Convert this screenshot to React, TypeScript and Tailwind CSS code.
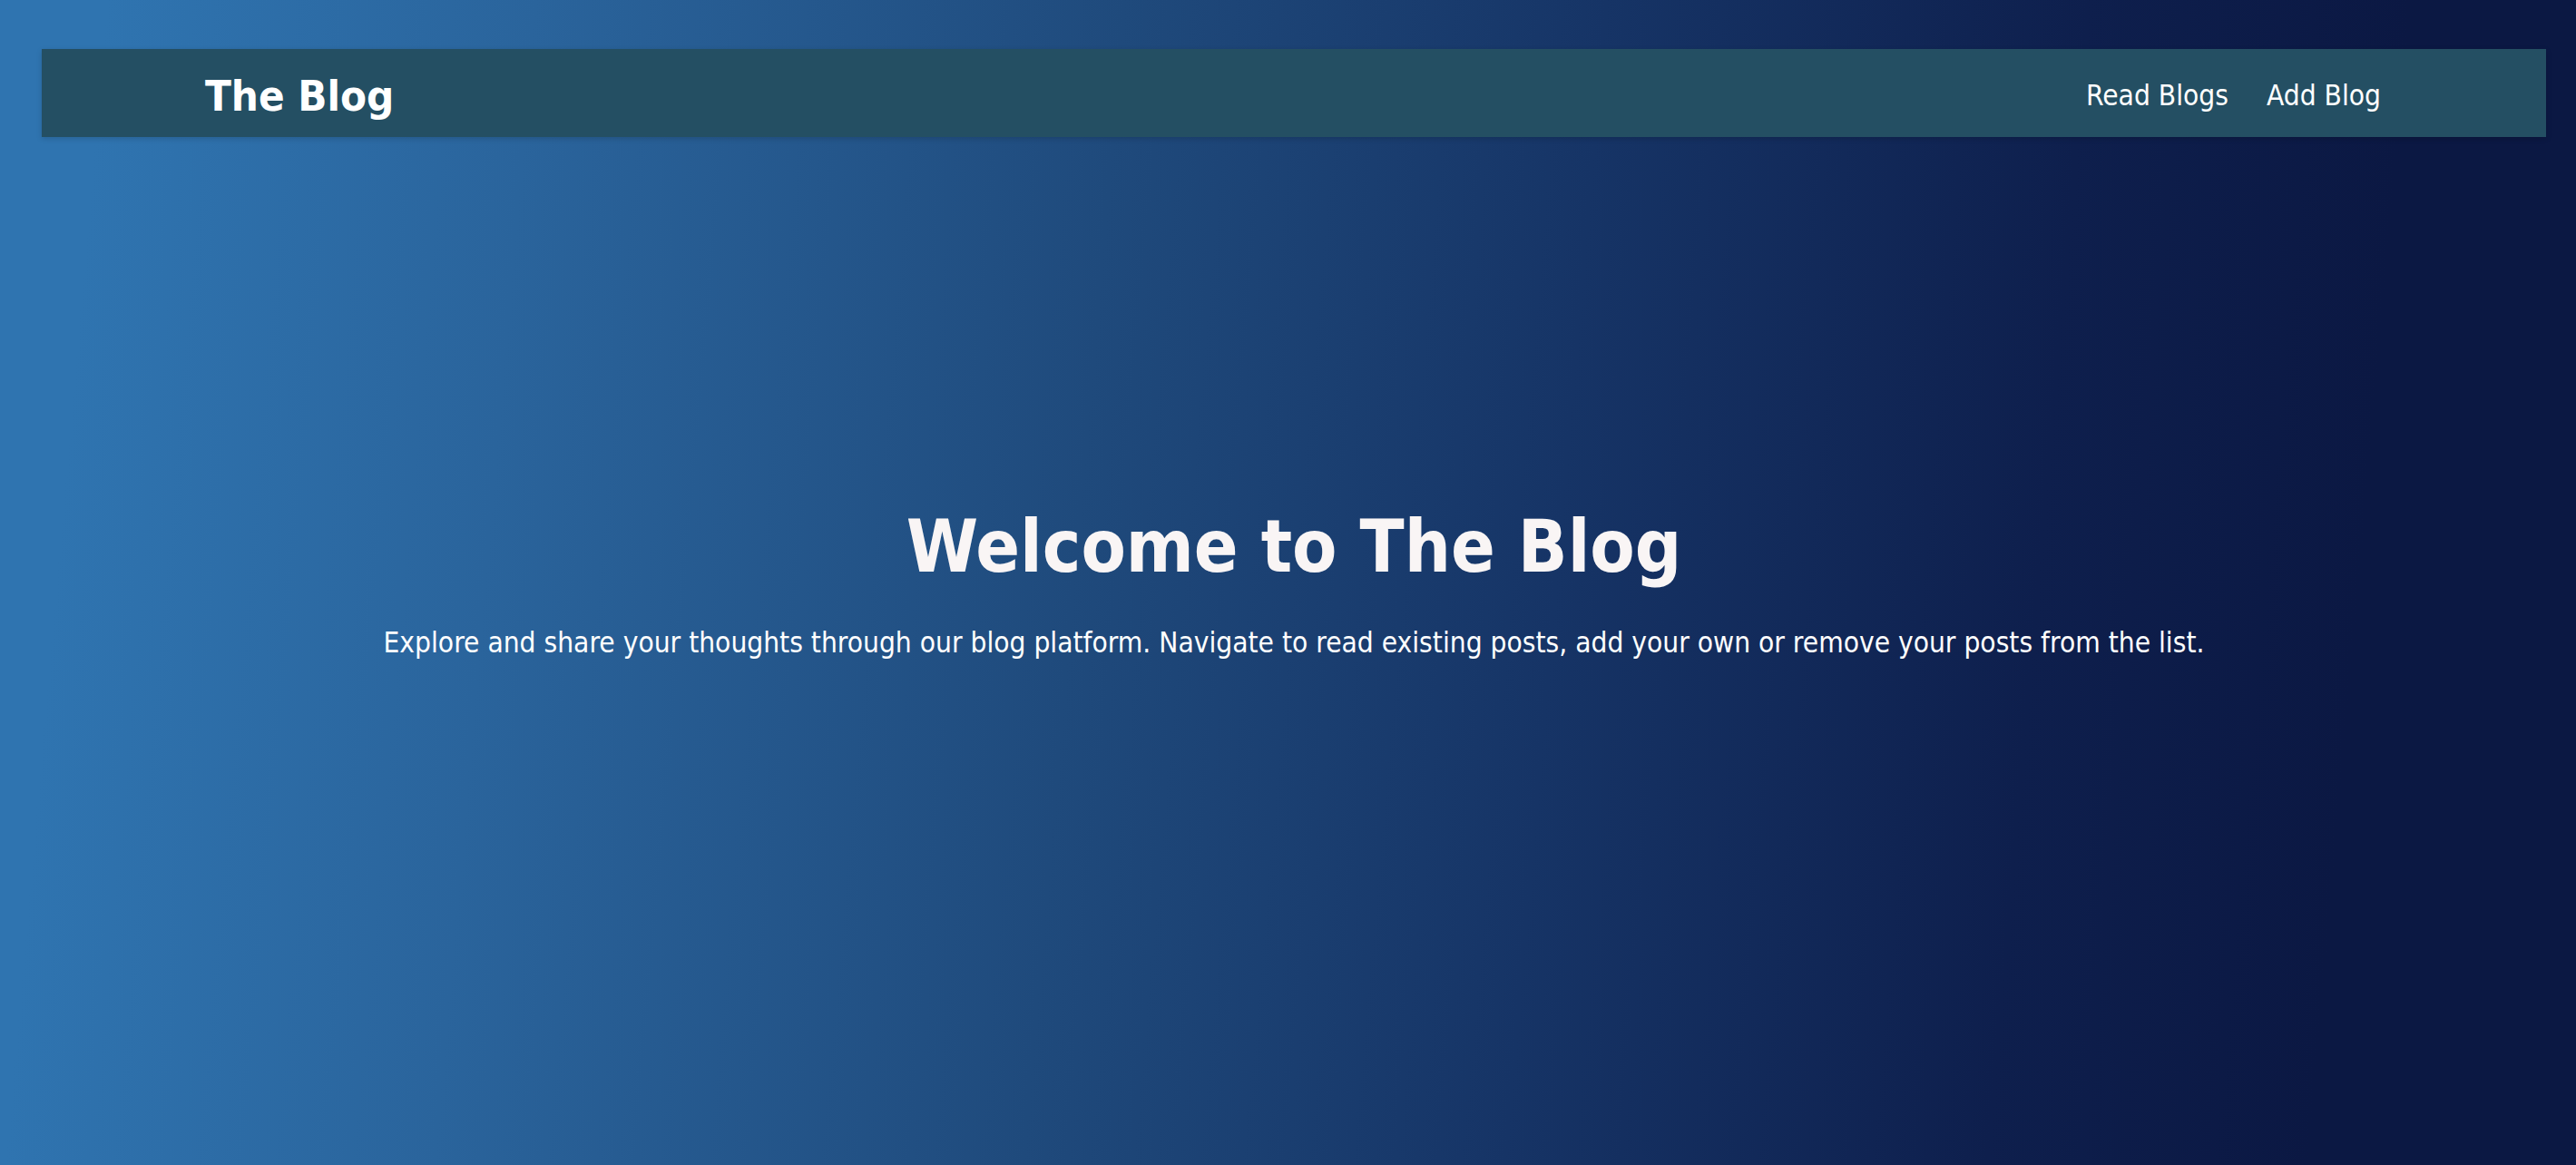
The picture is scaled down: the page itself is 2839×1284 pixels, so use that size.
import React from "react";

export default function App() {
  return (
    <div className="h-screen w-full overflow-hidden bg-[linear-gradient(95deg,#2f74b0_4%,#2a649c_20%,#1f4a7c_42%,#163466_60%,#0e1f4d_78%,#0b1843_90%,#0b1843_100%)] pt-[54px] font-['DejaVu_Sans_Condensed','DejaVu_Sans',sans-serif] text-white">
      <nav className="ml-[46px] mr-[33px] flex h-[97px] items-center justify-between bg-[#244f63] pl-[180px] pr-[182px] pt-[6px] shadow-[0_2px_6px_rgba(0,0,0,0.15)]">
        <div className="text-[47px] font-bold leading-none">The Blog</div>
        <div className="flex items-center gap-[42px] text-[31.4px] leading-none">
          <a className="cursor-pointer">Read Blogs</a>
          <a className="cursor-pointer">Add Blog</a>
        </div>
      </nav>
      <main className="ml-[46px] mr-[33px] mt-[412px] flex flex-col items-center text-center">
        <h1 className="text-[80px] font-bold leading-none text-[#f9f5f5]">Welcome to The Blog</h1>
        <p className="mt-[50px] text-[31.4px] leading-none">
          Explore and share your thoughts through our blog platform. Navigate to read existing posts, add your own or remove your posts from the list.
        </p>
      </main>
    </div>
  );
}
